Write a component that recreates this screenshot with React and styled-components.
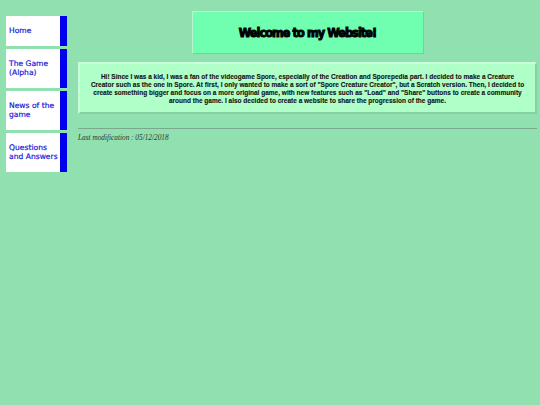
import React from 'react';
import styled, { createGlobalStyle } from 'styled-components';

const GlobalStyle = createGlobalStyle`
  html, body {
    margin: 0;
    padding: 0;
    background: #90e0b0;
    min-height: 100%;
  }
`;

const Page = styled.div`
  display: flex;
  align-items: flex-start;
  padding: 16px 3px 0 6px;
  gap: 11px;
  min-height: 405px;
  box-sizing: border-box;
`;

const Nav = styled.nav`
  display: flex;
  flex-direction: column;
  gap: 3px;
  width: 61px;
  flex-shrink: 0;
`;

const NavItem = styled.a`
  display: block;
  background: #ffffff;
  border-right: 7px solid #0000ee;
  padding: 10px 1px 10px 3px;
  font-family: "DejaVu Sans", Verdana, sans-serif;
  font-size: 7.6px;
  line-height: 9.5px;
  color: #1a1ad8;
  text-decoration: none;
  -webkit-text-stroke: 0.2px #1a1ad8;
`;

const Main = styled.main`
  flex: 1;
  min-width: 0;
  display: flex;
  flex-direction: column;
  margin-top: -5px;
`;

const TitleBox = styled.div`
  align-self: center;
  width: 230px;
  height: 41px;
  display: flex;
  align-items: center;
  justify-content: center;
  background: #70ffb0;
  border: 1px solid #b5f5cf;
  border-right-color: #7ccc9c;
  border-bottom-color: #7ccc9c;
`;

const Title = styled.h1`
  margin: 0;
  font-family: "DejaVu Sans Condensed", "DejaVu Sans", sans-serif;
  font-stretch: condensed;
  font-weight: bold;
  font-size: 12.5px;
  letter-spacing: -0.9px;
  color: #000;
  -webkit-text-stroke: 1px #000;
`;

const Intro = styled.p`
  margin: 8px 0 0;
  background: #b0ffc8;
  border: 2px solid #c8ffdc;
  border-right-color: #88d0a4;
  border-bottom-color: #88d0a4;
  padding: 9px 0 7px;
  font-family: "Liberation Sans", Arial, sans-serif;
  font-weight: bold;
  font-size: 6.5px;
  line-height: 8px;
  text-align: center;
  white-space: nowrap;
  color: #111;
  -webkit-text-stroke: 0.1px #111;
`;

const Rule = styled.hr`
  margin: 14px 0 0;
  border: none;
  border-top: 1px solid #7aa88c;
  height: 0;
`;

const Modified = styled.p`
  margin: 4px 0 0;
  font-family: "Liberation Serif", "Times New Roman", serif;
  font-style: italic;
  font-size: 7.3px;
  color: #333;
`;

const links = ['Home', 'The Game (Alpha)', 'News of the game', 'Questions and Answers'];

export default function App() {
  return (
    <>
      <GlobalStyle />
      <Page>
        <Nav>
          {links.map(l => (
            <NavItem key={l} href="#">{l}</NavItem>
          ))}
        </Nav>
        <Main>
          <TitleBox>
            <Title>Welcome to my Website!</Title>
          </TitleBox>
          <Intro>
            Hi! Since I was a kid, I was a fan of the videogame Spore, especially of the Creation and Sporepedia part. I decided to make a Creature<br />
            Creator such as the one in Spore. At first, I only wanted to make a sort of "Spore Creature Creator", but a Scratch version. Then, I decided to<br />
            create something bigger and focus on a more original game, with new features such as "Load" and "Share" buttons to create a community<br />
            around the game. I also decided to create a website to share the progression of the game.
          </Intro>
          <Rule />
          <Modified>Last modification : 05/12/2018</Modified>
        </Main>
      </Page>
    </>
  );
}
